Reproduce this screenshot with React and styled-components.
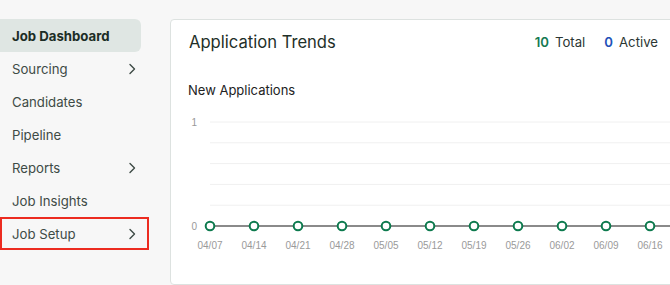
import React from "react";
import styled, { createGlobalStyle } from "styled-components";

const GlobalStyle = createGlobalStyle`
  html, body {
    margin: 0;
    padding: 0;
    background: #f7f7f7;
    overflow: hidden;
  }
  body {
    font-family: Inter, "Open Sans", sans-serif;
  }
`;

const PageSC = styled.div`
  display: flex;
  flex-direction: row;
  align-items: flex-start;
  width: 100%;
  height: 285px;
  padding-top: 19px;
  box-sizing: border-box;
`;

const SidebarSC = styled.nav`
  display: flex;
  flex-direction: column;
  width: 149px;
  flex-shrink: 0;
`;

const NavItemSC = styled.div`
  display: flex;
  align-items: center;
  justify-content: space-between;
  height: 33px;
  box-sizing: border-box;
  padding: 0 10px 0 12px;
  margin-right: ${props => (props.active ? "8px" : "0")};
  background: ${props => (props.active ? "#dfe6e3" : "transparent")};
  color: ${props => (props.active ? "#1c2d26" : "#3e4b46")};
  font-size: 13.2px;
  font-weight: ${props => (props.active ? 700 : 400)};
  outline: ${props => (props.highlighted ? "2px solid #ec2b20" : "none")};
  outline-offset: -2px;
  border-radius: ${props => (props.highlighted ? "0" : "0 6px 6px 0")};
  cursor: pointer;
`;

const ChevronSC = styled.svg`
  width: 14px;
  height: 14px;
  flex-shrink: 0;
`;

const CardSC = styled.section`
  flex: 1;
  margin-left: 21px;
  margin-right: -20px;
  height: 266px;
  background: #fff;
  border: 1px solid #dde2e0;
  border-radius: 4px;
  box-sizing: border-box;
  padding: 10px 0 0 10px;
`;

const CardHeaderSC = styled.div`
  display: flex;
  align-items: center;
  justify-content: space-between;
  padding: 0 31px 0 8px;
`;

const TitleSC = styled.h2`
  margin: 0;
  font-size: 16.6px;
  line-height: 24px;
  font-weight: 400;
  color: #1f3029;
`;

const StatsSC = styled.div`
  display: flex;
  align-items: center;
  gap: 19px;
  font-size: 13.2px;
  color: #2c3633;
`;

const StatSC = styled.span`
  display: flex;
  gap: 6px;
`;

const StatNumSC = styled.span`
  font-weight: 600;
  color: ${props => props.color};
`;

const SubtitleSC = styled.div`
  margin: 27px 0 0 7px;
  font-size: 13px;
  line-height: 18px;
  color: #222;
`;

const ChartSC = styled.svg`
  display: block;
  margin-top: 12px;
  font-family: "Liberation Sans", Arial, sans-serif;
`;

const navItems = [
  { label: "Job Dashboard", active: true },
  { label: "Sourcing", chevron: true },
  { label: "Candidates" },
  { label: "Pipeline" },
  { label: "Reports", chevron: true },
  { label: "Job Insights" },
  { label: "Job Setup", chevron: true, highlighted: true },
];

const dates = ["04/07", "04/14", "04/21", "04/28", "05/05", "05/12", "05/19", "05/26", "06/02", "06/09", "06/16"];

const Chevron = () => (
  <ChevronSC viewBox="0 0 14 14" fill="none" stroke="#3e4b46" strokeWidth="1.4" strokeLinecap="round" strokeLinejoin="round">
    <path d="M5 2.5 L9.5 7 L5 11.5" />
  </ChevronSC>
);

const Chart = () => {
  const x0 = 29;
  const step = 44;
  const grid = [11, 31.8, 52.6, 73.4, 94.2];
  const base = 115;
  return (
    <ChartSC width="500" height="150" viewBox="0 0 500 150">
      {grid.map(y => (
        <line key={y} x1={x0} x2={500} y1={y} y2={y} stroke="#f0f0f0" strokeWidth="1" />
      ))}
      <text x="16" y={grid[0] + 3.5} fontSize="10" fill="#999" textAnchor="end">1</text>
      <text x="16" y={base + 3.5} fontSize="10" fill="#999" textAnchor="end">0</text>
      <line x1={x0} x2={500} y1={base} y2={base} stroke="#8a8a8a" strokeWidth="2" />
      {[...dates, ""].map((d, i) => (
        <circle key={i} cx={x0 + i * step} cy={base} r="4.3" fill="#fff" stroke="#0d7a4e" strokeWidth="2" />
      ))}
      {dates.map((d, i) => (
        <text key={d} x={x0 + i * step} y={base + 23} fontSize="10" fill="#9a9a9a" textAnchor="middle">{d}</text>
      ))}
    </ChartSC>
  );
};

const App = () => (
  <>
    <GlobalStyle />
    <PageSC>
      <SidebarSC>
        {navItems.map(item => (
          <NavItemSC key={item.label} active={item.active} highlighted={item.highlighted}>
            <span>{item.label}</span>
            {item.chevron && <Chevron />}
          </NavItemSC>
        ))}
      </SidebarSC>
      <CardSC>
        <CardHeaderSC>
          <TitleSC>Application Trends</TitleSC>
          <StatsSC>
            <StatSC><StatNumSC color="#157a52">10</StatNumSC>Total</StatSC>
            <StatSC><StatNumSC color="#2251b8">0</StatNumSC>Active</StatSC>
          </StatsSC>
        </CardHeaderSC>
        <SubtitleSC>New Applications</SubtitleSC>
        <Chart />
      </CardSC>
    </PageSC>
  </>
);

export default App;
